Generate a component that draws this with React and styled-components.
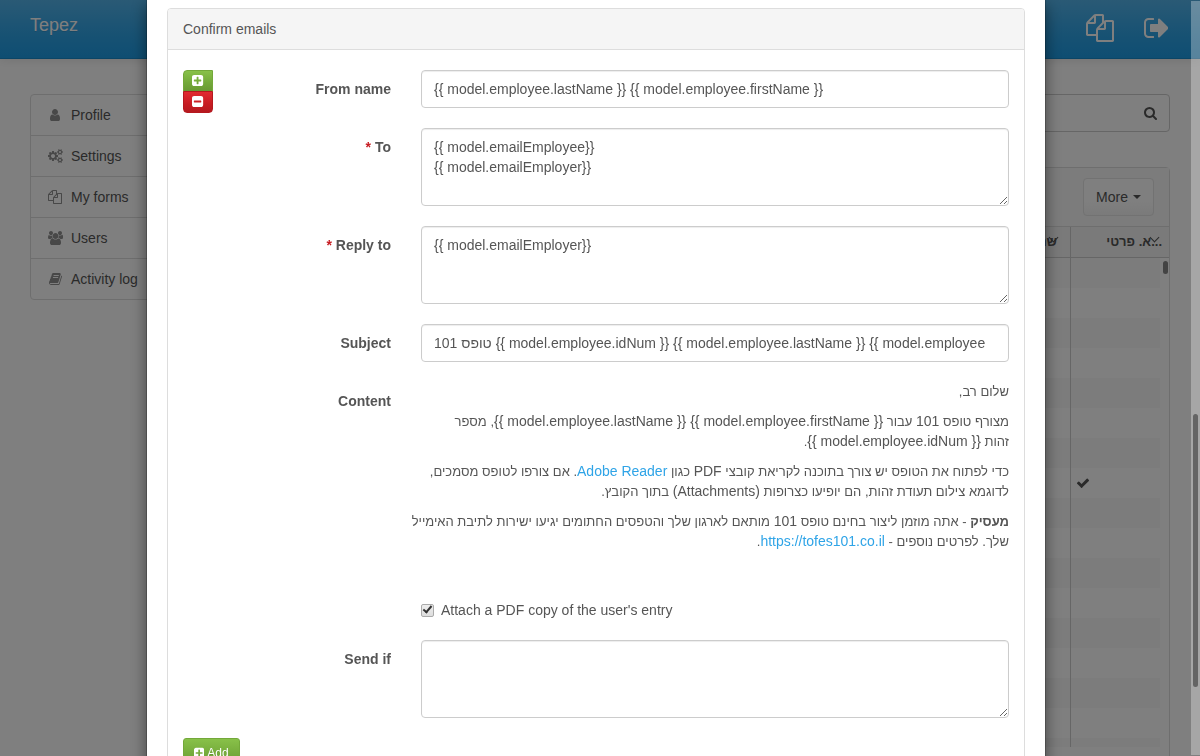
import React from 'react';
import styled, { createGlobalStyle, css } from 'styled-components';

const icons = {
    user: [
        '0 0 1280 1792',
        'M1280 1399q0 109-62.5 187t-150.5 78H213q-88 0-150.5-78T0 1399q0-85 8.5-160.5t31.5-152 58.5-131 94-89T336 832q131 128 304 128t304-128q82 0 143.5 34.5t94 89 58.5 131 31.5 152 8.5 160.5zm-256-887q0 159-112.5 271.5T640 896 368.5 783.5 256 512t112.5-271.5T640 128t271.5 112.5T1024 512z'
    ],
    cogs: [
        '0 0 1920 1792',
        'M896 896q0-106-75-181t-181-75-181 75-75 181 75 181 181 75 181-75 75-181zm768 512q0-52-38-90t-90-38-90 38-38 90q0 53 37.5 90.5t90.5 37.5 90.5-37.5 37.5-90.5zm0-1024q0-52-38-90t-90-38-90 38-38 90q0 53 37.5 90.5t90.5 37.5 90.5-37.5 37.5-90.5zm-384 421v185q0 10-7 19.5t-16 10.5l-155 24q-11 35-32 76 34 48 90 115 7 11 7 20 0 12-7 19-23 30-82.5 89.5t-78.5 59.5q-11 0-21-7l-115-90q-37 19-77 31-11 108-23 155-7 24-30 24h-186q-11 0-20-7.5t-10-17.5l-23-153q-34-10-75-31l-118 89q-7 7-20 7-11 0-21-8-144-133-144-160 0-9 7-19 10-14 41-53t47-61q-23-44-35-82l-152-24q-10-1-17-9.5t-7-19.5v-185q0-10 7-19.5t16-10.5l155-24q11-35 32-76-34-48-90-115-7-11-7-20 0-12 7-20 22-30 82-89t79-59q11 0 21 7l115 90q34-18 77-32 11-108 23-154 7-24 30-24h186q11 0 20 7.5t10 17.5l23 153q34 10 75 31l118-89q8-7 20-7 11 0 21 8 144 133 144 160 0 8-7 19-12 16-42 54t-45 60q23 48 34 82l152 23q10 2 17 10.5t7 19.5zm640 533v140q0 16-149 31-12 27-30 52 51 113 51 138 0 4-4 7-122 71-124 71-8 0-46-47t-52-68q-20 2-30 2t-30-2q-14 21-52 68t-46 47q-2 0-124-71-4-3-4-7 0-25 51-138-18-25-30-52-149-15-149-31v-140q0-16 149-31 13-29 30-52-51-113-51-138 0-4 4-7 4-2 35-20t59-34 30-16q8 0 46 46.5t52 67.5q20-2 30-2t30 2q51-71 92-112l6-2q4 0 124 70 4 3 4 7 0 25-51 138 17 23 30 52 149 15 149 31zm0-1024v140q0 16-149 31-12 27-30 52 51 113 51 138 0 4-4 7-122 71-124 71-8 0-46-47t-52-68q-20 2-30 2t-30-2q-14 21-52 68t-46 47q-2 0-124-71-4-3-4-7 0-25 51-138-18-25-30-52-149-15-149-31v-140q0-16 149-31 13-29 30-52-51-113-51-138 0-4 4-7 4-2 35-20t59-34 30-16q8 0 46 46.5t52 67.5q20-2 30-2t30 2q51-71 92-112l6-2q4 0 124 70 4 3 4 7 0 25-51 138 17 23 30 52 149 15 149 31z'
    ],
    files: [
        '0 0 1792 1792',
        'M1696 384q40 0 68 28t28 68v1216q0 40-28 68t-68 28h-960q-40 0-68-28t-28-68v-288h-544q-40 0-68-28t-28-68v-672q0-40 20-88t48-76l408-408q28-28 76-48t88-20h416q40 0 68 28t28 68v328q68-40 128-40h416zm-544 213l-299 299h299v-299zm-640-384l-299 299h299v-299zm196 647l316-316v-416h-384v416q0 40-28 68t-68 28h-416v640h512v-256q0-40 20-88t48-76zm956 804v-1152h-384v416q0 40-28 68t-68 28h-416v640h896z'
    ],
    users: [
        '0 0 1920 1792',
        'M593 896q-162 5-265 128h-134q-82 0-138-40.5t-56-118.5q0-353 124-353 6 0 43.5 21t97.5 42.5 119 21.5q67 0 133-23-5 37-5 66 0 159 93 293zm1071 637q0 120-73 189.5t-194 69.5h-874q-121 0-194-69.5t-73-189.5q0-53 3.5-103.5t14-109 26.5-108.5 43-97.5 62-81 85.5-53.5 111.5-20q10 0 43 21.5t73 48 107 48 135 21.5 135-21.5 107-48 73-48 43-21.5q61 0 111.5 20t85.5 53.5 62 81 43 97.5 26.5 108.5 14 109 3.5 103.5zm-1024-1277q0 106-75 181t-181 75-181-75-75-181 75-181 181-75 181 75 75 181zm704 384q0 159-112.5 271.5t-271.5 112.5-271.5-112.5-112.5-271.5 112.5-271.5 271.5-112.5 271.5 112.5 112.5 271.5zm576 225q0 78-56 118.5t-138 40.5h-134q-103-123-265-128 93-134 93-293 0-29-5-66 66 23 133 23 59 0 119-21.5t97.5-42.5 43.5-21q124 0 124 353zm-128-609q0 106-75 181t-181 75-181-75-75-181 75-181 181-75 181 75 75 181z'
    ],
    book: [
        '0 0 1664 1792',
        'M1639 478q40 57 18 129l-275 906q-19 64-76.5 107.5t-122.5 43.5h-923q-77 0-148.5-53.5t-99.5-131.5q-24-67-2-127 0-4 3-27t4-37q1-8-3-21.5t-3-19.5q2-11 8-21t16.5-23.5 16.5-23.5q23-38 45-91.5t30-91.5q3-10 .5-30t-.5-28q3-11 17-28t17-23q21-36 42-92t25-90q1-9-2.5-32t.5-28q4-13 22-30.5t22-22.5q19-26 42.5-84.5t27.5-96.5q1-8-3-25.5t-2-26.5q2-8 9-18t18-23 17-21q8-12 16.5-30.5t15-35 16-36 19.5-32 26.5-23.5 36-11.5 47.5 5.5l-1 3q38-9 51-9h761q74 0 114 56t18 130l-274 906q-36 119-71.5 153.5t-128.5 34.5h-869q-27 0-38 15-11 16-1 43 24 70 144 70h923q29 0 56-15.5t35-41.5l300-987q7-22 5-57 38 15 59 43zm-1064 2q-4 13 2 22.5t20 9.5h608q13 0 25.5-9.5t16.5-22.5l21-64q4-13-2-22.5t-20-9.5h-608q-13 0-25.5 9.5t-16.5 22.5zm-83 256q-4 13 2 22.5t20 9.5h608q13 0 25.5-9.5t16.5-22.5l21-64q4-13-2-22.5t-20-9.5h-608q-13 0-25.5 9.5t-16.5 22.5z'
    ],
    signOut: [
        '64 0 1568 1792',
        'M704 1440q0 4 1 20t.5 26.5-3 23.5-10 19.5-20.5 6.5h-320q-119 0-203.5-84.5t-84.5-203.5v-704q0-119 84.5-203.5t203.5-84.5h320q13 0 22.5 9.5t9.5 22.5q0 4 1 20t.5 26.5-3 23.5-10 19.5-20.5 6.5h-320q-66 0-113 47t-47 113v704q0 66 47 113t113 47h312l11.5 1 11.5 3 8 5.5 7 9 2 13.5zm928-544q0 26-19 45l-544 544q-19 19-45 19t-45-19-19-45v-288h-448q-26 0-45-19t-19-45v-384q0-26 19-45t45-19h448v-288q0-26 19-45t45-19 45 19l544 544q19 19 19 45z'
    ],
    search: [
        '64 0 1664 1792',
        'M1216 832q0-185-131.5-316.5t-316.5-131.5-316.5 131.5-131.5 316.5 131.5 316.5 316.5 131.5 316.5-131.5 131.5-316.5zm512 832q0 52-38 90t-90 38q-54 0-90-38l-343-342q-179 124-399 124-143 0-273.5-55.5t-225-150-150-225-55.5-273.5 55.5-273.5 150-225 225-150 273.5-55.5 273.5 55.5 225 150 150 225 55.5 273.5q0 220-124 399l343 343q37 37 37 90z'
    ],
    check: [
        '0 0 1792 1792',
        'M1671 566q0 40-28 68l-724 724-136 136q-28 28-68 28t-68-28l-136-136-362-362q-28-28-28-68t28-68l136-136q28-28 68-28t68 28l294 295 656-657q28-28 68-28t68 28l136 136q28 28 28 68z'
    ],
    plus: [
        '128 0 1536 1792',
        'M1408 960v-128q0-26-19-45t-45-19h-320v-320q0-26-19-45t-45-19h-128q-26 0-45 19t-19 45v320h-320q-26 0-45 19t-19 45v128q0 26 19 45t45 19h320v320q0 26 19 45t45 19h128q26 0 45-19t19-45v-320h320q26 0 45-19t19-45zm256-544v960q0 119-84.5 203.5t-203.5 84.5h-960q-119 0-203.5-84.5t-84.5-203.5v-960q0-119 84.5-203.5t203.5-84.5h960q119 0 203.5 84.5t84.5 203.5z'
    ],
    minus: [
        '128 0 1536 1792',
        'M1408 960v-128q0-26-19-45t-45-19h-896q-26 0-45 19t-19 45v128q0 26 19 45t45 19h896q26 0 45-19t19-45zm256-544v960q0 119-84.5 203.5t-203.5 84.5h-960q-119 0-203.5-84.5t-84.5-203.5v-960q0-119 84.5-203.5t203.5-84.5h960q119 0 203.5 84.5t84.5 203.5z'
    ]
};

function Icon({ name, size = 14 }) {
    const [viewBox, path] = icons[name];
    return (
        <Glyph viewBox={viewBox} $size={size} aria-hidden="true">
            <path d={path} />
        </Glyph>
    );
}

const menu = [
    { icon: 'user', text: 'Profile' },
    { icon: 'cogs', text: 'Settings' },
    { icon: 'files', text: 'My forms' },
    { icon: 'users', text: 'Users' },
    { icon: 'book', text: 'Activity log' }
];

const rows = Array.from({ length: 17 }, (_, i) => ({ id: i, done: i === 7 }));

function Page() {
    return (
        <Shell>
            <Navbar>
                <Brand href="#">Tepez</Brand>
                <NavLinks>
                    <NavLink href="#" aria-label="My forms">
                        <Icon name="files" size={28} />
                    </NavLink>
                    <NavLink href="#" aria-label="Sign out">
                        <Icon name="signOut" size={28} />
                    </NavLink>
                </NavLinks>
            </Navbar>
            <Columns>
                <Sidebar>
                    {menu.map(item => (
                        <SidebarLink href="#" key={item.text}>
                            <SidebarIcon>
                                <Icon name={item.icon} />
                            </SidebarIcon>
                            {item.text}
                        </SidebarLink>
                    ))}
                </Sidebar>
                <Main>
                    <SearchBox>
                        <SearchInput type="search" aria-label="Search" />
                        <Icon name="search" />
                    </SearchBox>
                    <GridPanel>
                        <GridToolbar>
                            <MoreButton type="button">
                                More <Caret />
                            </MoreButton>
                        </GridToolbar>
                        <GridViewport>
                            <Grid>
                                <colgroup>
                                    <col />
                                    <col width="90" />
                                    <col width="9" />
                                </colgroup>
                                <thead>
                                    <tr>
                                        <HeadCell $inset={13}>
                                            <HeadText>
                                                שם
                                                <SortMark $right={0} />
                                            </HeadText>
                                        </HeadCell>
                                        <HeadCell $inset={7} colSpan={2}>
                                            <HeadText>
                                                א. פרטי...
                                                <SortMark $right={4} />
                                            </HeadText>
                                        </HeadCell>
                                    </tr>
                                </thead>
                                <tbody>
                                    {rows.map(row => (
                                        <BodyRow key={row.id}>
                                            <BodyCell />
                                            <BodyCell>
                                                {row.done && (
                                                    <Icon name="check" />
                                                )}
                                            </BodyCell>
                                            <Gutter />
                                        </BodyRow>
                                    ))}
                                </tbody>
                            </Grid>
                            <GridThumb />
                        </GridViewport>
                    </GridPanel>
                </Main>
            </Columns>
        </Shell>
    );
}

function EmailForm() {
    return (
        <Fields>
            <Field>
                <Label htmlFor="from">From name</Label>
                <TextInput
                    id="from"
                    defaultValue="{{ model.employee.lastName }} {{ model.employee.firstName }}"
                />
            </Field>
            <Field>
                <Label htmlFor="to">
                    <Required>*</Required> To
                </Label>
                <TextArea
                    id="to"
                    defaultValue={
                        '{{ model.emailEmployee}}\n{{ model.emailEmployer}}'
                    }
                />
            </Field>
            <Field>
                <Label htmlFor="reply">
                    <Required>*</Required> Reply to
                </Label>
                <TextArea id="reply" defaultValue="{{ model.emailEmployer}}" />
            </Field>
            <Field>
                <Label htmlFor="subject">Subject</Label>
                <TextInput
                    id="subject"
                    defaultValue="טופס 101 {{ model.employee.idNum }} {{ model.employee.lastName }} {{ model.employee"
                />
            </Field>
            <Field>
                <Label as="span">Content</Label>
                <Content dir="rtl" lang="he">
                    <p>שלום רב,</p>
                    <p>
                        מצורף טופס <Latin>101</Latin> עבור{' '}
                        <Latin>
                            {
                                '{{ model.employee.firstName }} {{ model.employee.lastName }}'
                            }
                        </Latin>
                        , מספר
                        <br />
                        זהות <Latin>{'{{ model.employee.idNum }}'}</Latin>.
                    </p>
                    <p>
                        כדי לפתוח את הטופס יש צורך בתוכנה לקריאת קובצי{' '}
                        <Latin>PDF</Latin> כגון{' '}
                        <Latin as="a" href="#">
                            Adobe Reader
                        </Latin>
                        . אם צורפו לטופס מסמכים,
                        <br />
                        לדוגמא צילום תעודת זהות, הם יופיעו כצרופות{' '}
                        <Latin>(Attachments)</Latin> בתוך הקובץ.
                    </p>
                    <p>
                        <b>מעסיק</b> - אתה מוזמן ליצור בחינם טופס{' '}
                        <Latin>101</Latin> מותאם לארגון שלך והטפסים החתומים
                        יגיעו ישירות לתיבת האימייל
                        <br />
                        שלך. לפרטים נוספים -{' '}
                        <Latin as="a" href="#">
                            https://tofes101.co.il
                        </Latin>
                        .
                    </p>
                </Content>
            </Field>
            <Field>
                <span />
                <CheckLabel>
                    <Checkbox type="checkbox" defaultChecked />
                    Attach a PDF copy of the user's entry
                </CheckLabel>
            </Field>
            <Field>
                <Label htmlFor="sendif">Send if</Label>
                <TextArea id="sendif" />
            </Field>
        </Fields>
    );
}

function App() {
    return (
        <>
            <GlobalStyle />
            <Page />
            <Backdrop>
                <Dialog role="dialog" aria-label="Confirm emails">
                    <Panel>
                        <PanelHeading>Confirm emails</PanelHeading>
                        <PanelBody>
                            <Entry>
                                <ButtonStack>
                                    <SquareButton
                                        type="button"
                                        aria-label="Add email"
                                    >
                                        <Icon name="plus" size={13} />
                                    </SquareButton>
                                    <SquareButton
                                        type="button"
                                        aria-label="Remove email"
                                        $danger
                                    >
                                        <Icon name="minus" size={13} />
                                    </SquareButton>
                                </ButtonStack>
                                <EmailForm />
                            </Entry>
                            <AddButton type="button">
                                <Icon name="plus" size={12} />
                                Add
                            </AddButton>
                        </PanelBody>
                    </Panel>
                </Dialog>
                <ScrollTrack>
                    <ScrollThumb />
                </ScrollTrack>
            </Backdrop>
        </>
    );
}

export default App;

const GlobalStyle = createGlobalStyle`
    *, *::before, *::after {
        box-sizing: border-box;
    }
    body {
        margin: 0;
        height: 100vh;
        overflow: hidden;
        background: #fff;
        color: #555;
        font: 14px/20px 'Liberation Sans', Arial, sans-serif;
    }
    button, input, textarea {
        font: inherit;
        color: inherit;
    }
    a {
        color: #2fa4e7;
        text-decoration: none;
    }
`;

const Glyph = styled.svg`
    display: block;
    height: ${props => props.$size}px;
    width: auto;
    flex: none;
    fill: currentColor;
`;

const Shell = styled.div`
    height: 100vh;
    overflow: hidden;
`;

const Navbar = styled.header`
    display: flex;
    justify-content: space-between;
    height: 59px;
    padding: 0 30px;
    border-bottom: 1px solid #178acc;
    background: linear-gradient(#54b4eb, #2fa4e7 60%, #1d9ce5);
    box-shadow: 0 1px 10px rgba(0, 0, 0, 0.1);
`;

const Brand = styled.a`
    padding: 15px 0;
    color: #fff;
    font-size: 18px;
    text-shadow: 0 1px 0 rgba(0, 0, 0, 0.1);
`;

const NavLinks = styled.nav`
    display: flex;
    align-items: center;
    gap: 30px;
    padding: 0 2px 2px 0;
`;

const NavLink = styled.a`
    color: #fff;
`;

const Columns = styled.div`
    display: grid;
    grid-template-columns: 170px 1fr;
    align-items: start;
    gap: 30px;
    padding: 35px 30px 0;
`;

const Sidebar = styled.nav`
    border: 1px solid #ddd;
    border-radius: 4px;
`;

const SidebarLink = styled.a`
    display: flex;
    align-items: center;
    padding: 10px 15px;
    color: #555;

    & + & {
        border-top: 1px solid #ddd;
    }
`;

const SidebarIcon = styled.span`
    display: flex;
    justify-content: center;
    width: 18px;
    margin-right: 7px;
    color: #909090;
`;

const Main = styled.main`
    min-width: 0;
`;

const SearchBox = styled.div`
    display: flex;
    align-items: center;
    height: 38px;
    padding-right: 12px;
    border: 1px solid #ccc;
    border-radius: 4px;
    margin-bottom: 35px;
`;

const SearchInput = styled.input`
    flex: 1;
    border: 0;
    background: none;
`;

const GridPanel = styled.section`
    height: 620px;
    border: 1px solid #ddd;
    border-radius: 4px;
`;

const GridToolbar = styled.div`
    display: flex;
    justify-content: flex-end;
    padding: 10px 15px;
    border-bottom: 1px solid #ddd;
    background: #f8f8f8;
`;

const MoreButton = styled.button`
    display: flex;
    align-items: center;
    gap: 5px;
    padding: 8px 12px;
    border: 1px solid #e4e4e4;
    border-radius: 4px;
    background: linear-gradient(#fff, #fff 60%, #f5f5f5);
`;

const Caret = styled.span`
    border-top: 4px solid;
    border-left: 4px solid transparent;
    border-right: 4px solid transparent;
`;

const GridViewport = styled.div`
    position: relative;
    height: 520px;
    overflow: hidden;
`;

const Grid = styled.table`
    width: 100%;
    table-layout: fixed;
    border-collapse: separate;
    border-spacing: 0;
`;

const HeadCell = styled.th`
    height: 31px;
    padding: 0 ${props => props.$inset}px 0 0;
    border-bottom: 1px solid #ccc;
    background: #f5f5f5;
    font-size: 13px;
    text-align: right;

    & + & {
        border-left: 1px solid #ccc;
    }
`;

const HeadText = styled.span`
    position: relative;
    white-space: nowrap;
`;

const SortMark = styled.i`
    position: absolute;
    top: 0;
    right: ${props => props.$right}px;
    width: 7px;
    height: 7px;
    border: solid #555;
    border-width: 0 1px 1px 0;
    transform: rotate(45deg);
`;

const BodyRow = styled.tr`
    height: 30px;
`;

const BodyCell = styled.td`
    padding: 0 5px;
    ${BodyRow}:nth-child(odd) & {
        background: #f8f8f8;
    }

    & + & {
        border-left: 1px solid #ccc;
    }
`;

const Gutter = styled.td`
    padding: 0;
`;

const GridThumb = styled.div`
    position: absolute;
    top: 34px;
    right: 1px;
    width: 5px;
    height: 13px;
    border-radius: 3px;
    background: #888;
`;

const Backdrop = styled.div`
    position: fixed;
    inset: 0;
    display: flex;
    justify-content: center;
    align-items: flex-start;
    padding-right: 8px;
    overflow: hidden;
    background: rgba(0, 0, 0, 0.5);
`;

const Dialog = styled.div`
    width: 100%;
    max-width: 898px;
    padding: 8px 20px 20px;
    background: #fff;
    box-shadow: 0 0 0 1px rgba(0, 0, 0, 0.2), 0 5px 15px rgba(0, 0, 0, 0.5);
`;

const ScrollTrack = styled.div`
    position: absolute;
    top: 1px;
    right: 0;
    bottom: 1px;
    width: 9px;
    background: rgba(255, 255, 255, 0.3);
`;

const ScrollThumb = styled.div`
    width: 5px;
    height: 273px;
    margin: 413px 2px 0;
    border-radius: 3px;
    background: #646464;
`;

const Panel = styled.section`
    border: 1px solid #ddd;
    border-radius: 4px;
`;

const PanelHeading = styled.div`
    padding: 10px 15px;
    border-bottom: 1px solid #ddd;
    border-radius: 3px 3px 0 0;
    background: #f5f5f5;
`;

const PanelBody = styled.div`
    padding: 20px 15px;
`;

const Entry = styled.div`
    display: flex;
    align-items: flex-start;
    margin-bottom: 20px;
`;

const ButtonStack = styled.div`
    display: flex;
    flex-direction: column;
    width: 30px;
`;

const gradientButton = css`
    display: flex;
    align-items: center;
    justify-content: center;
    border: 1px solid ${props => (props.$danger ? '#b5191f' : '#73a839')};
    background: ${props =>
        props.$danger
            ? 'linear-gradient(#e12b31, #c71c22 60%, #b5191f)'
            : 'linear-gradient(#88c149, #73a839 60%, #699934)'};
    color: #fff;
    font-size: 12px;
`;

const SquareButton = styled.button`
    ${gradientButton}
    height: 22px;
    padding: 0 0 1px;
    border-radius: 4px 0 0 0;

    & + & {
        margin-top: -1px;
        border-radius: 0 0 4px 4px;
    }
`;

const AddButton = styled.button`
    ${gradientButton}
    gap: 3px;
    height: 30px;
    padding: 0 10px;
    border-radius: 3px;
    text-shadow: 0 1px 0 rgba(0, 0, 0, 0.1);
`;

const Fields = styled.form`
    display: grid;
    flex: 1;
    gap: 20px;
    min-width: 0;
`;

const Field = styled.div`
    display: grid;
    grid-template-columns: 178px minmax(0, 1fr);
    gap: 30px;
    align-items: start;
`;

const Label = styled.label`
    padding-top: 9px;
    font-weight: bold;
    text-align: right;
`;

const Required = styled.span`
    color: #c71c22;
`;

const control = css`
    display: block;
    width: 100%;
    padding: 8px 12px;
    border: 1px solid #ccc;
    border-radius: 4px;
    background: #fff;
    box-shadow: inset 0 1px 1px rgba(0, 0, 0, 0.075);
`;

const TextInput = styled.input`
    ${control}
    height: 38px;
`;

const TextArea = styled.textarea`
    ${control}
    height: 78px;
    resize: vertical;
`;

const Content = styled.div`
    padding-bottom: 28px;
    font-size: 13px;
    white-space: nowrap;

    p {
        margin: 0 0 10px;
    }
    p:last-child {
        margin: 0;
    }
`;

/* Latin runs sit one size above the Hebrew around them */
const Latin = styled.span`
    font-size: 14px;
    line-height: 14px;
`;

const CheckLabel = styled.label`
    display: flex;
    align-items: center;
    gap: 7px;
`;

const Checkbox = styled.input`
    appearance: none;
    width: 13px;
    height: 13px;
    margin: 0;
    border: 1px solid #aaa;
    border-radius: 2px;
    background: linear-gradient(#eee, #ddd);

    &:checked::before {
        content: '';
        display: block;
        width: 5px;
        height: 9px;
        margin: -1px 0 0 3px;
        border: solid #333;
        border-width: 0 2px 2px 0;
        transform: rotate(40deg);
    }
`;
